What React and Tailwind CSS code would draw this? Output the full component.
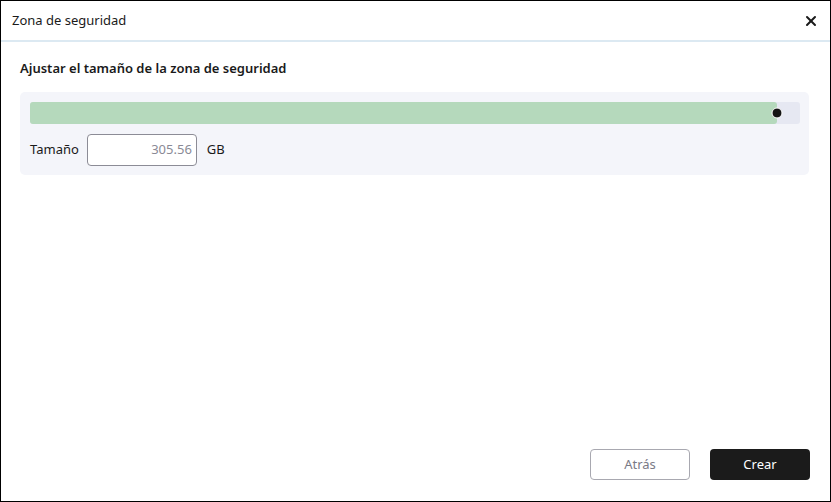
import { X } from "lucide-react";

const SizeSlider = ({ percent }) => (
  <div className="relative h-[22px] rounded-[3px] bg-[#e6e8f2]">
    <div
      className="h-full rounded-[3px] bg-[#b5d9bc]"
      style={{ width: `${percent}%` }}
    />
    <div
      className="absolute top-1/2 h-[11px] w-[11px] -translate-x-1/2 -translate-y-1/2 rounded-full border border-white bg-[#141414]"
      style={{ left: `${percent}%` }}
    />
  </div>
);

const App = () => {
  return (
    <div className="flex h-[502px] w-[831px] flex-col border border-black bg-white font-['Noto_Sans',sans-serif] text-[13px] text-[#1a1a1a]">
      <header className="flex h-[41px] items-center justify-between border-b-2 border-[#dce9f2] pl-[11px] pr-[11px]">
        <span>Zona de seguridad</span>
        <X size={16} strokeWidth={3} />
      </header>

      <main className="flex-grow pl-[19px] pr-[21px] pt-[17px]">
        <h2 className="mb-[13px] font-semibold">
          Ajustar el tamaño de la zona de seguridad
        </h2>
        <div className="rounded-[5px] bg-[#f4f5fa] pl-[10px] pr-[9px] pt-[10px] pb-[9px]">
          <SizeSlider percent={97} />
          <div className="mt-[10px] flex items-center">
            <span>Tamaño</span>
            <div className="ml-[8px] flex h-[32px] w-[110px] items-center justify-end rounded-[4px] border border-[#8c8c96] bg-white pr-[4px] text-[#8a8a96]">
              305.56
            </div>
            <span className="ml-[10px]">GB</span>
          </div>
        </div>
      </main>

      <footer className="flex justify-end gap-[20px] pr-[20px] pb-[21px]">
        <button className="h-[31px] w-[100px] rounded-[4px] border border-[#a8a8b0] bg-white text-[#7a7a86]">
          Atrás
        </button>
        <button className="h-[31px] w-[100px] rounded-[4px] bg-[#1b1b1b] text-white">
          Crear
        </button>
      </footer>
    </div>
  );
};

App.displayName = "App";

export default App;
